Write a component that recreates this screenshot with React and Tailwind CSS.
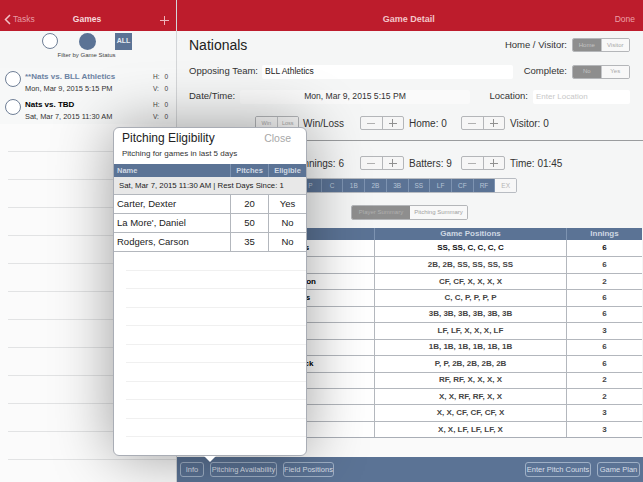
import React from "react";

const font = { fontFamily: '"Liberation Sans", Arial, sans-serif' };

function Seg({ items, active = 0, className = "", text = "text-[6px]", itemClass = "flex-1" }) {
  return (
    <div className={`flex border border-[#b4b6b9] rounded-[2px] overflow-hidden ${className}`}>
      {items.map((t, i) => (
        <div
          key={t}
          className={`${itemClass} flex items-center justify-center ${text} ${i > 0 ? "border-l border-[#c4c6c9]" : ""} ${
            i === active ? "bg-[#8e8e8e] text-[#c4c4c4]" : "bg-[#f8f8f8] text-[#a8a8a8]"
          }`}
        >
          {t}
        </div>
      ))}
    </div>
  );
}

function Stepper() {
  return (
    <div className="w-[44px] h-[14px] flex border border-[#b4b6b9] rounded-[2px] text-[#9a9a9a] bg-[#f6f6f6]">
      <div className="flex-1 flex items-center justify-center border-r border-[#b4b6b9]">
        <div className="w-[8px] h-px bg-[#b0b0b0]" />
      </div>
      <div className="flex-1 flex items-center justify-center relative">
        <div className="w-[8px] h-px bg-[#909090]" />
        <div className="w-px h-[8px] bg-[#909090] absolute" />
      </div>
    </div>
  );
}

function GameRow({ title, date, blue }) {
  return (
    <div className="h-[28px] bg-[#f7f8f8] flex items-center pl-[5px] pr-[8px]">
      <div className="w-[16px] h-[16px] rounded-full border border-[#6f7f96] bg-white shrink-0 -mt-[7px]" />
      <div className="ml-[4px] flex-1 min-w-0">
        <div className={`text-[8px] font-bold leading-[11px] ${blue ? "text-[#6c83a3]" : "text-black"}`}>{title}</div>
        <div className="text-[7.4px] leading-[11px] mt-[1px] text-[#333]">{date}</div>
      </div>
      <div className="text-[6.5px] text-[#444] leading-[11px] w-[15px]">
        <div className="flex justify-between"><span>H:</span><span>0</span></div>
        <div className="flex justify-between mt-[1px]"><span>V:</span><span>0</span></div>
      </div>
    </div>
  );
}

const rows = [
  ["Brandon Williams", "SS, SS, C, C, C, C", "6"],
  ["Jason Dexter (J)", "2B, 2B, SS, SS, SS, SS", "6"],
  ["Christopher Johnson", "CF, CF, X, X, X, X", "2"],
  ["Christian Williams", "C, C, P, P, P, P", "6"],
  ["Tyler Moore", "3B, 3B, 3B, 3B, 3B, 3B", "6"],
  ["Jonathan Porter", "LF, LF, X, X, X, LF", "3"],
  ["Ben Lewis", "1B, 1B, 1B, 1B, 1B, 1B", "6"],
  ["Zachary McCormick", "P, P, 2B, 2B, 2B, 2B", "6"],
  ["Sam Cole", "RF, RF, X, X, X, X", "2"],
  ["Luke Ward", "X, X, RF, RF, X, X", "2"],
  ["Will Reed", "X, X, CF, CF, CF, X", "3"],
  ["Eli Hart", "X, X, LF, LF, LF, X", "3"],
];

const pitchers = [
  ["Carter, Dexter", "20", "Yes"],
  ["La More', Daniel", "50", "No"],
  ["Rodgers, Carson", "35", "No"],
];

function BarBtn({ children, className = "" }) {
  return (
    <div className={`h-[15px] px-[2px] border border-[#9fb0c6] rounded-[3px] flex items-center justify-center text-[7.5px] text-[#d8dfe8] whitespace-nowrap ${className}`}>
      {children}
    </div>
  );
}

export default function App() {
  return (
    <div className="relative w-[643px] h-[482px] overflow-hidden bg-white flex" style={font}>
      {/* Sidebar */}
      <div className="w-[177px] h-full flex flex-col bg-[#f4f5f5] border-r border-[#d4d6d8] shrink-0">
        <div className="h-[31px] bg-[#bd1c2c] relative flex items-end justify-between pb-[5px] px-[4px] text-white shrink-0">
          <div className="flex items-center text-[#e79aa2] text-[8.5px]">
            <svg width="7" height="11" viewBox="0 0 7 11" fill="none" stroke="#f2c2c7" strokeWidth="1.5"><path d="M6 1 1.5 5.5 6 10" /></svg>
            <span className="ml-[2px]">Tasks</span>
          </div>
          <div className="absolute left-0 right-[2px] bottom-[5px] text-center text-[8.5px] font-bold text-[#f7dadd]">Games</div>
          <svg className="mr-[3px] mb-[1px]" width="9" height="9" viewBox="0 0 9 9" stroke="#eeb4ba" strokeWidth="1"><path d="M4.5 0v9M0 4.5h9" /></svg>
        </div>
        <div className="h-[37px] shrink-0 flex flex-col items-center bg-[#f6f7f7]">
          <div className="flex items-center mt-[1px] ml-[-2px] h-[18px]">
            <div className="w-[16px] h-[16px] rounded-full border border-[#6f7f96] bg-white" />
            <div className="w-[17px] h-[17px] rounded-full bg-[#5b7395] ml-[21px]" />
            <div className="w-[17px] h-[17px] bg-[#5b7395] ml-[19px] flex items-center justify-center text-[7px] font-bold text-[#e6ebf2]">ALL</div>
          </div>
          <div className="text-[6px] text-[#444] mt-[1px] ml-[-3px]">Filter by Game Status</div>
        </div>
        <GameRow blue title="**Nats vs. BLL Athletics" date="Mon, Mar 9, 2015 5:15 PM" />
        <GameRow title="Nats vs. TBD" date="Sat, Mar 7, 2015 11:30 AM" />
        <div className="flex-1 flex flex-col pl-[8px] bg-[#fbfbfb]">
          {Array.from({ length: 12 }).map((_, i) => (
            <div key={i} className="h-[28px] shrink-0 border-b border-[#e2e3e4]" />
          ))}
        </div>
      </div>

      {/* Detail */}
      <div className="flex-1 min-w-0 flex flex-col bg-[#f5f6f6]">
        <div className="h-[31px] bg-[#bd1c2c] flex items-end justify-between pb-[5px] pr-[8px] shrink-0">
          <div className="w-[30px]" />
          <div className="text-[9px] font-bold text-[#f3c6ca] ml-[-4px]">Game Detail</div>
          <div className="text-[8.5px] text-[#eca0a8]">Done</div>
        </div>

        <div className="h-[110px] shrink-0 relative border-b border-[#9a9c9e] text-[#333]">
          <div className="h-[28px] flex items-center pl-[12px] pr-[13px]">
            <div className="text-[14px] text-[#222]">Nationals</div>
            <div className="ml-auto text-[9.5px] mr-[5px]">Home / Visitor:</div>
            <Seg items={["Home", "Visitor"]} className="w-[58px] h-[14px]" />
          </div>
          <div className="h-[25px] flex items-center pl-[12px] pr-[13px]">
            <div className="text-[9.5px] w-[73px]">Opposing Team:</div>
            <div className="w-[251px] h-[14px] bg-white rounded-[2px] flex items-center pl-[3px] text-[8.5px] text-[#222]">BLL Athletics</div>
            <div className="ml-auto text-[9.5px] mr-[5px]">Complete:</div>
            <Seg items={["No", "Yes"]} className="w-[58px] h-[14px]" />
          </div>
          <div className="h-[25px] flex items-center pl-[12px] pr-[13px]">
            <div className="text-[9.5px] w-[51px]">Date/Time:</div>
            <div className="w-[230px] h-[14px] bg-[#fafafa] rounded-[2px] flex items-center justify-center text-[8.6px] text-[#333]">Mon, Mar 9, 2015 5:15 PM</div>
            <div className="ml-auto text-[9.5px] mr-[5px]">Location:</div>
            <div className="w-[97px] h-[14px] bg-white rounded-[2px] flex items-center pl-[3px] text-[8px] text-[#c8c8c8]">Enter Location</div>
          </div>
          <div className="h-[26px] flex items-center pl-[78px] mt-[1px]">
            <Seg items={["Win", "Loss"]} active={-1} className="w-[44px] h-[14px]" text="text-[5.5px]" />
            <div className="text-[10px] ml-[4px] w-[57px]">Win/Loss</div>
            <Stepper />
            <div className="text-[10px] ml-[5px] w-[52px]">Home: 0</div>
            <Stepper />
            <div className="text-[10px] ml-[5px]">Visitor: 0</div>
          </div>
        </div>

        <div className="flex-1 min-h-0 flex flex-col items-stretch">
          <div className="h-[30px] mt-[7px] flex items-center text-[10px] text-[#333] shrink-0">
            <div className="w-[167px] text-right">Innings: 6</div>
            <div className="ml-[16px]"><Stepper /></div>
            <div className="ml-[5px] w-[52px]">Batters: 9</div>
            <Stepper />
            <div className="ml-[5px]">Time: 01:45</div>
          </div>
          <div className="flex h-[15px] ml-[122px] w-[218px] border border-[#b8bcc2] rounded-[2px] overflow-hidden text-[6.5px] shrink-0">
            {["P", "C", "1B", "2B", "3B", "SS", "LF", "CF", "RF", "EX"].map((p) => (
              <div
                key={p}
                className={`flex-1 flex items-center justify-center border-l border-[#7d93b1] first:border-l-0 ${
                  p === "EX" ? "bg-[#f7f7f7] text-[#b4b4b4]" : "bg-[#5b7395] text-[#b7c4d5]"
                }`}
              >
                {p}
              </div>
            ))}
          </div>
          <div className="flex mt-[12px] ml-[174px] w-[117px] h-[15px] border border-[#b4b6b9] rounded-[2px] overflow-hidden text-[6px] shrink-0">
            <div className="w-[58px] bg-[#8e8e8e] text-[#b0b0b0] flex items-center justify-center whitespace-nowrap">Player Summary</div>
            <div className="flex-1 bg-[#f8f8f8] text-[#a0a0a0] flex items-center justify-center whitespace-nowrap">Pitching Summary</div>
          </div>
          <div className="mt-[8px] border-b border-[#a9aeb6] shrink-0 mr-px">
            <div className="grid grid-cols-[197px_192px_1fr] h-[12px] bg-[#5b7395] text-[8px] font-bold text-[#cfd8e3]">
              <div className="flex items-center justify-center">Name</div>
              <div className="flex items-center justify-center border-l border-[#7d93b1]">Game Positions</div>
              <div className="flex items-center justify-center border-l border-[#7d93b1]">Innings</div>
            </div>
            {rows.map((r, i) => (
              <div
                key={r[1] + i}
                className={`grid grid-cols-[197px_192px_1fr] h-[16.45px] bg-white text-[8px] font-bold whitespace-nowrap ${
                  i ? "border-t border-[#b3b7bd] text-[#444]" : "text-[#111]"
                }`}
              >
                <div className="flex items-center justify-center text-black">{r[0]}</div>
                <div className="flex items-center justify-center border-l border-[#b3b7bd]">{r[1]}</div>
                <div className="flex items-center justify-center border-l border-[#b3b7bd]">{r[2]}</div>
              </div>
            ))}
          </div>
          <div className="flex-1 bg-[#fafafa]" />
          <div className="h-[25px] bg-[#5b7395] flex items-center px-[3px] shrink-0">
            <BarBtn className="w-[24px]">Info</BarBtn>
            <BarBtn className="ml-[6px] w-[67px]">Pitching Availability</BarBtn>
            <BarBtn className="ml-[6px] w-[51px]">Field Positions</BarBtn>
            <BarBtn className="ml-auto w-[66px]">Enter Pitch Counts</BarBtn>
            <BarBtn className="ml-[6px] w-[43px]">Game Plan</BarBtn>
          </div>
        </div>
      </div>

      {/* Popover */}
      <div className="absolute left-[113px] top-[127px] w-[194px] h-[329px] bg-white border border-[#a9adb5] rounded-[6px] shadow-[0_0_60px_rgba(0,0,0,0.38)] flex flex-col overflow-hidden">
        <div className="h-[36px] shrink-0 relative pl-[8px] pt-[1px]">
          <div className="flex justify-between pr-[15px] items-baseline">
            <span className="text-[12px] text-[#222]">Pitching Eligibility</span>
            <span className="text-[10.5px] text-[#a8a8a8]">Close</span>
          </div>
          <div className="text-[8px] text-[#333] mt-[1px]">Pitching for games in last 5 days</div>
        </div>
        <div className="grid grid-cols-[116px_38px_1fr] h-[13px] shrink-0 bg-[#5b7395] text-[7.5px] font-bold text-[#cfd8e3]">
          <div className="flex items-center pl-[3px]">Name</div>
          <div className="flex items-center justify-center border-l border-[#7d93b1]">Pitches</div>
          <div className="flex items-center justify-center border-l border-[#7d93b1]">Eligible</div>
        </div>
        <div className="h-[17px] shrink-0 bg-[#e8e8e8] text-[7.8px] text-[#222] flex items-center pl-[5px] whitespace-nowrap">
          Sat, Mar 7, 2015 11:30 AM | Rest Days Since: 1
        </div>
        {pitchers.map((p) => (
          <div key={p[0]} className="grid grid-cols-[116px_38px_1fr] h-[19px] shrink-0 border-t border-[#b3b7bd] text-[9.5px] text-[#222]">
            <div className="flex items-center pl-[3px]">{p[0]}</div>
            <div className="flex items-center justify-center border-l border-[#b3b7bd]">{p[1]}</div>
            <div className="flex items-center justify-center border-l border-[#b3b7bd]">{p[2]}</div>
          </div>
        ))}
        <div className="border-t border-[#b3b7bd] flex-1 pl-[12px]">
          {Array.from({ length: 10 }).map((_, i) => (
            <div key={i} className="h-[18.5px] border-b border-[#f0f0f0]" />
          ))}
        </div>
      </div>
      <div className="absolute left-[204px] top-[456px] w-0 h-0 border-l-[6px] border-r-[6px] border-t-[6px] border-l-transparent border-r-transparent border-t-white" />
    </div>
  );
}
